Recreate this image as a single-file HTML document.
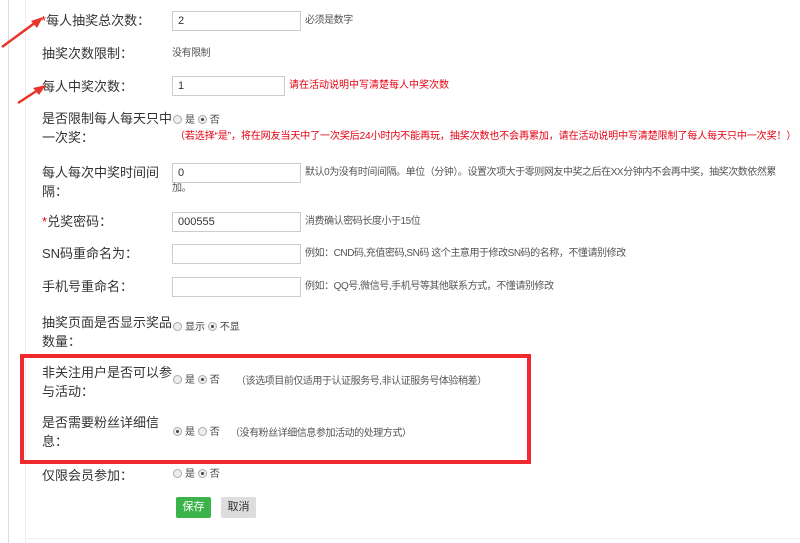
<!DOCTYPE html>
<html><head><meta charset="utf-8"><style>
*{margin:0;padding:0;box-sizing:border-box}
body{width:800px;height:543px;background:#fff;position:relative;overflow:hidden;font-family:"Liberation Sans","Microsoft YaHei","Noto Sans CJK SC",sans-serif;color:#333}
.a{position:absolute;white-space:nowrap}
.l{font-size:13px;color:#333;line-height:17px}
.h{font-size:10px;color:#555;line-height:13px;letter-spacing:-0.45px}
.r{color:#e60012}
.in{position:absolute;left:172px;width:129px;height:20px;border:1px solid #ccc;background:#fff;font-size:11px;padding:3px 5px;color:#333;line-height:12px}
.rd{display:inline-block;width:9px;height:9px;border:1px solid #aaa;border-radius:50%;background:#eee;vertical-align:-1px;position:relative;margin-right:3px}
.rd.c::after{content:"";position:absolute;left:2px;top:2px;width:3px;height:3px;border-radius:50%;background:#444}
.rt{font-size:10px;color:#444;line-height:13px}
</style></head><body>
<div class="a" style="left:8px;top:0;width:1px;height:543px;background:#ddd"></div>
<div class="a" style="left:25px;top:0;width:1px;height:543px;background:#eee"></div>
<div class="a" style="left:25px;top:538px;width:775px;height:1px;background:#eee"></div>

<div class="a l" style="left:41px;top:12px"><span class="r">*</span>每人抽奖总次数：</div>
<div class="in" style="top:11px">2</div>
<div class="a h" style="left:305px;top:14px">必须是数字</div>

<div class="a l" style="left:42px;top:45px">抽奖次数限制：</div>
<div class="a h" style="left:172px;top:47px">没有限制</div>

<div class="a l" style="left:42px;top:78px">每人中奖次数：</div>
<div class="in" style="top:76px;width:113px">1</div>
<div class="a h r" style="left:289px;top:79px;letter-spacing:0">请在活动说明中写清楚每人中奖次数</div>

<div class="a l" style="left:42px;top:110px">是否限制每人每天只中</div>
<div class="a l" style="left:42px;top:129px">一次奖：</div>
<div class="a rt" style="left:173px;top:114px"><span class="rd"></span>是 <span class="rd c"></span>否</div>
<div class="a h r" style="left:175px;top:130px;letter-spacing:-0.1px">（若选择“是”，将在网友当天中了一次奖后24小时内不能再玩，抽奖次数也不会再累加，请在活动说明中写清楚限制了每人每天只中一次奖！）</div>

<div class="a l" style="left:42px;top:164px">每人每次中奖时间间</div>
<div class="a l" style="left:42px;top:183px">隔：</div>
<div class="in" style="top:163px">0</div>
<div class="a h" style="left:305px;top:166px">默认0为没有时间间隔。单位（分钟）。设置次项大于零则网友中奖之后在XX分钟内不会再中奖，抽奖次数依然累</div>
<div class="a h" style="left:172px;top:182px">加。</div>

<div class="a l" style="left:42px;top:213px"><span class="r">*</span>兑奖密码：</div>
<div class="in" style="top:212px">000555</div>
<div class="a h" style="left:305px;top:215px">消费确认密码长度小于15位</div>

<div class="a l" style="left:42px;top:245px">SN码重命名为：</div>
<div class="in" style="top:244px"></div>
<div class="a h" style="left:305px;top:247px">例如：CND码,充值密码,SN码 这个主意用于修改SN码的名称，不懂请别修改</div>

<div class="a l" style="left:42px;top:278px">手机号重命名：</div>
<div class="in" style="top:277px"></div>
<div class="a h" style="left:305px;top:280px">例如：QQ号,微信号,手机号等其他联系方式，不懂请别修改</div>

<div class="a l" style="left:42px;top:314px">抽奖页面是否显示奖品</div>
<div class="a l" style="left:42px;top:333px">数量：</div>
<div class="a rt" style="left:173px;top:321px"><span class="rd"></span>显示 <span class="rd c"></span>不显</div>

<div class="a" style="left:20px;top:354px;width:511px;height:110px;border:4px solid #ee2a2f"></div>
<div class="a l" style="left:42px;top:364px">非关注用户是否可以参</div>
<div class="a l" style="left:42px;top:383px">与活动：</div>
<div class="a rt" style="left:173px;top:374px"><span class="rd"></span>是 <span class="rd c"></span>否</div>
<div class="a h" style="left:236px;top:375px">（该选项目前仅适用于认证服务号,非认证服务号体验稍差）</div>

<div class="a l" style="left:42px;top:414px">是否需要粉丝详细信</div>
<div class="a l" style="left:42px;top:433px">息：</div>
<div class="a rt" style="left:173px;top:426px"><span class="rd c"></span>是 <span class="rd"></span>否</div>
<div class="a h" style="left:230px;top:427px">（没有粉丝详细信息参加活动的处理方式）</div>

<div class="a l" style="left:42px;top:467px">仅限会员参加：</div>
<div class="a rt" style="left:173px;top:468px"><span class="rd"></span>是 <span class="rd c"></span>否</div>

<div class="a" style="left:176px;top:497px;width:35px;height:21px;background:#3cb34a;color:#fff;font-size:11px;line-height:21px;text-align:center;border-radius:2px">保存</div>
<div class="a" style="left:221px;top:497px;width:35px;height:21px;background:#ddd;color:#333;font-size:11px;line-height:21px;text-align:center;border-radius:2px">取消</div>

<svg class="a" style="left:0;top:0" width="60" height="110">
<path d="M2 47 L36 22" stroke="#e8352b" stroke-width="2.5" fill="none"/>
<path d="M43 17 L31 21 L37 28 Z" fill="#e8352b"/>
<path d="M18 103 L38 90" stroke="#e8352b" stroke-width="2.5" fill="none"/>
<path d="M46 85 L33 88 L39 95 Z" fill="#e8352b"/>
</svg>
</body></html>
